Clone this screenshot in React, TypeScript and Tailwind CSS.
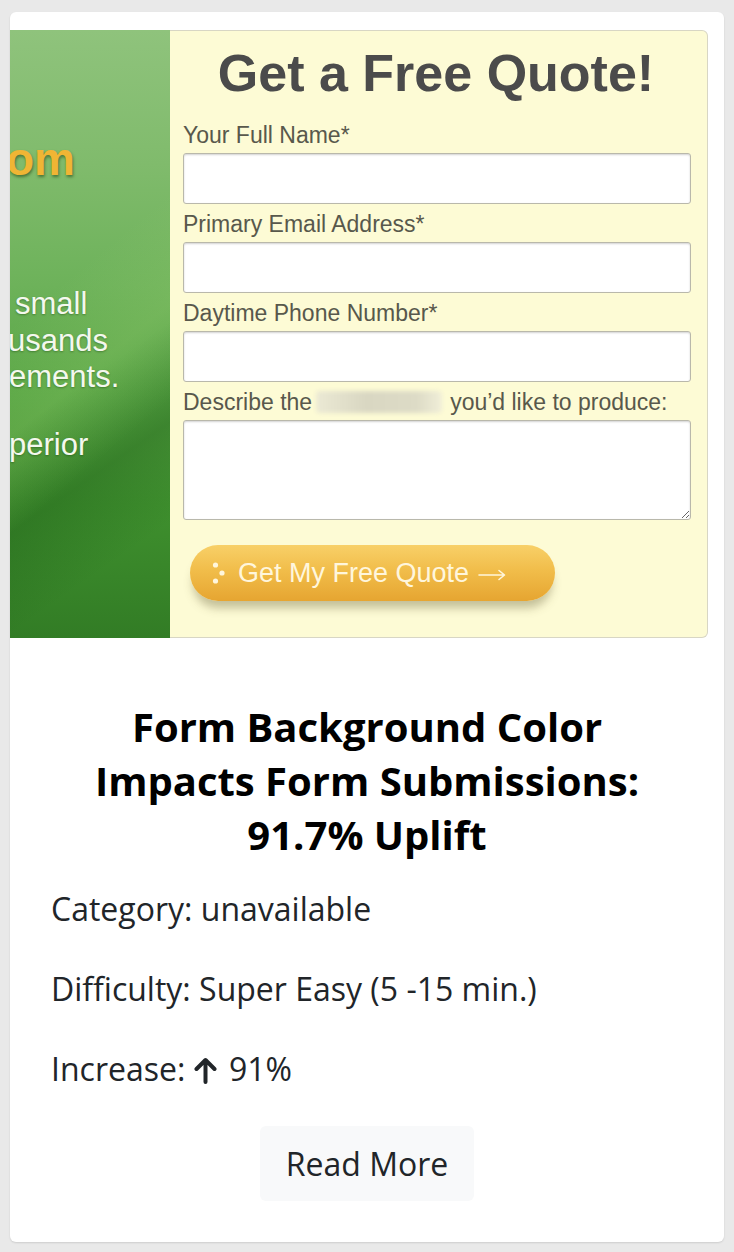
import React from "react";

function Field({ label }: { label: React.ReactNode }) {
  return (
    <div className="flex flex-col">
      <div className="text-[23px] leading-[26px] text-[#58584c] font-['Liberation_Sans',Arial,sans-serif]">{label}</div>
      <div className="mt-[5px] h-[51px] bg-white border border-[#b9b8ab] rounded-[3px] shadow-[inset_0_1px_2px_rgba(0,0,0,0.18)]" />
    </div>
  );
}

function ArrowUp() {
  return (
    <svg width="23" height="28" viewBox="0 0 23 28" className="inline-block align-[-3px] mr-[4px]">
      <path d="M11.5 26V4.5M2.5 13L11.5 4L20.5 13" fill="none" stroke="#212529" strokeWidth="4" strokeLinecap="round" strokeLinejoin="round" />
    </svg>
  );
}

function Dots() {
  return (
    <svg width="14" height="26" viewBox="0 0 14 26" className="mr-[12px]">
      <circle cx="3.5" cy="5" r="2.6" fill="#fff6dc" />
      <circle cx="10" cy="13" r="2.6" fill="#fff6dc" />
      <circle cx="3.5" cy="21" r="2.6" fill="#fff6dc" />
    </svg>
  );
}

function LongArrow() {
  return (
    <svg width="28" height="14" viewBox="0 0 28 14" className="ml-[9px] mt-[3px]">
      <path d="M1 7H26M21 2.5L26.5 7L21 11.5" fill="none" stroke="#fff6dc" strokeWidth="1.6" strokeLinecap="round" strokeLinejoin="round" />
    </svg>
  );
}

export default function App() {
  return (
    <div className="min-h-screen bg-[#e9e9e9] pt-[12px] px-[10px] pb-[10px]">
      <div className="bg-white rounded-[6px] h-[1230px] shadow-[0_1px_2px_rgba(0,0,0,0.12)] overflow-hidden flex flex-col">
        {/* image */}
        <div className="mt-[18px] mr-[16px] h-[608px] flex">
          <div className="w-[160px] shrink-0 overflow-hidden bg-[linear-gradient(140deg,transparent_40%,rgba(160,210,115,0.22)_55%,transparent_68%),linear-gradient(145deg,transparent_56%,rgba(25,85,20,0.35)_70%,transparent_84%),linear-gradient(180deg,#8fc37c_0%,#80bb6c_22%,#6db25a_42%,#56a443_60%,#3f902e_78%,#327c25_100%)] font-['Liberation_Sans',Arial,sans-serif]">
            <div className="mt-[106px] ml-[-4px] text-[46px] leading-[46px] font-bold text-[#f0b534] [text-shadow:1px_2px_3px_rgba(40,70,20,0.6)]">om</div>
            <div className="mt-[104px] text-[31px] leading-[36.5px] text-[#f4f8ee] [text-shadow:0_1px_2px_rgba(20,60,10,0.4)]">
              <div className="pl-[5px]">small</div>
              <div className="ml-[-2px]">usands</div>
              <div className="ml-[-1px]">ements.</div>
              <div className="ml-[-1px] mt-[31px]">perior</div>
            </div>
          </div>
          <div className="flex-1 bg-[#fdfbd5] border-t border-r border-b border-[#d8d6c4] rounded-r-[6px] pl-[13px] pr-[16px] pt-[16px] flex flex-col font-['Liberation_Sans',Arial,sans-serif]">
            <div className="text-center text-[52px] leading-[52px] font-bold text-[#4b4b4b] pr-[2px]">Get a Free Quote!</div>
            <div className="mt-[23px] flex flex-col gap-[7px]">
              <Field label="Your Full Name*" />
              <Field label="Primary Email Address*" />
              <Field label="Daytime Phone Number*" />
            </div>
            <div className="mt-[7px] flex items-center text-[23px] leading-[26px] text-[#58584c]">
              <span>Describe the</span>
              <span className="inline-block w-[126px] h-[22px] mx-[4px] rounded-[4px] bg-[linear-gradient(90deg,#ebe9d4,#d9d7c2_40%,#dddbc6_80%,#f0eed8)] blur-[2px]" />
              <span className="ml-[4px]">you’d like to produce:</span>
            </div>
            <textarea readOnly className="mt-[5px] h-[100px] w-full bg-white border border-[#b9b8ab] rounded-[3px] shadow-[inset_0_1px_2px_rgba(0,0,0,0.18)] outline-none" />
            <div className="mt-[25px] ml-[7px] w-[365px] h-[56px] rounded-full bg-[linear-gradient(180deg,#f8d068_0%,#f1bd4a_45%,#e6a531_100%)] shadow-[0_10px_10px_-3px_rgba(90,80,40,0.35)] flex items-center pl-[22px] text-[27px] text-[#fff6dc]">
              <Dots />
              <span>Get My Free Quote</span>
              <LongArrow />
            </div>
          </div>
        </div>
        {/* body */}
        <div className="font-['Open_Sans',sans-serif] text-[#212529]">
          <h2 className="mt-[62px] px-[60px] text-center text-[40px] leading-[54px] font-bold text-black">
            Form Background Color Impacts Form Submissions: 91.7% Uplift
          </h2>
          <div className="mt-[23px] pl-[41px] flex flex-col gap-[32px] text-[32px] leading-[48px]">
            <div>Category: unavailable</div>
            <div>Difficulty: Super Easy (5 -15 min.)</div>
            <div>Increase: <ArrowUp /> 91%</div>
          </div>
          <div className="mt-[33px] flex justify-center">
            <div className="w-[214px] h-[75px] rounded-[6px] bg-[#f8f9fa] flex items-center justify-center text-[32px]">Read More</div>
          </div>
        </div>
      </div>
    </div>
  );
}
